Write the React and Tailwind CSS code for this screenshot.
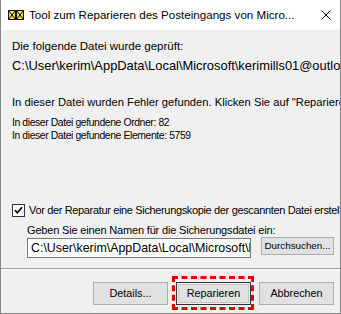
import React from "react";

function AppIcon() {
  return (
    <svg width="16" height="10" viewBox="0 0 16 10" className="shrink-0">
      <rect x="0.5" y="0.5" width="7" height="9" fill="#e9d94a" stroke="#111" />
      <path d="M0.5 0.5 L7.5 9.5 M7.5 0.5 L0.5 9.5" stroke="#111" strokeWidth="1" />
      <rect x="8.5" y="0.5" width="7" height="9" fill="#e9d94a" stroke="#111" />
      <path d="M8.5 0.5 L15.5 9.5 M15.5 0.5 L8.5 9.5" stroke="#111" strokeWidth="1" />
    </svg>
  );
}

export default function App() {
  const sans = { fontFamily: '"Liberation Sans", Arial, sans-serif' };
  return (
    <div
      className="w-[341px] h-[314px] flex flex-col border-l border-r border-b border-[#858585] bg-[#f0f0f0] overflow-hidden text-black"
      style={sans}
    >
      {/* title bar */}
      <div className="h-[30px] shrink-0 bg-white flex items-center pl-[7px] pr-[9px]">
        <AppIcon />
        <span className="ml-[5px] text-[11.6px] whitespace-nowrap">
          Tool zum Reparieren des Posteingangs von Micro...
        </span>
        <div className="ml-auto flex">
          <svg width="10" height="10" viewBox="0 0 10 10">
            <path d="M0.5 0.5 L9.5 9.5 M9.5 0.5 L0.5 9.5" stroke="#111" strokeWidth="1" />
          </svg>
        </div>
      </div>

      {/* content */}
      <div className="flex-1 flex flex-col overflow-hidden">
        <div className="pl-[11px] pt-[8px] whitespace-nowrap">
          <div className="text-[11.5px] leading-[16px]">Die folgende Datei wurde geprüft:</div>
          <div className="text-[12.9px] leading-[16px] mt-[4px]">
            C:\User\kerim\AppData\Local\Microsoft\kerimills01@outlook.com.pst
          </div>
          <div className="text-[11.2px] leading-[16px] mt-[20px]">
            In dieser Datei wurden Fehler gefunden. Klicken Sie auf "Reparieren", um sie zu beheben.
          </div>
          <div className="text-[10.4px] tracking-[-0.4px] leading-[13px] mt-[6px]">
            In dieser Datei gefundene Ordner: 82
          </div>
          <div className="text-[10.4px] tracking-[-0.4px] leading-[13px]">
            In dieser Datei gefundene Elemente: 5759
          </div>
        </div>

        <div className="pl-[11px] mt-[60px] flex items-center whitespace-nowrap h-[16px]">
          <div className="w-[13px] h-[13px] shrink-0 bg-white border border-[#333] flex items-center justify-center">
            <svg width="9" height="9" viewBox="0 0 9 9">
              <path d="M1 4.2 L3.4 6.8 L8 1.3" fill="none" stroke="#000" strokeWidth="1.7" />
            </svg>
          </div>
          <span className="ml-[4px] text-[11px] tracking-[-0.35px] leading-[16px]">
            Vor der Reparatur eine Sicherungskopie der gescannten Datei erstellen
          </span>
        </div>

        <div className="pl-[26px] mt-[4px] text-[11px] tracking-[-0.17px] leading-[16px] whitespace-nowrap">
          Geben Sie einen Namen für die Sicherungsdatei ein:
        </div>

        <div className="pl-[26px] flex items-start">
          <div className="w-[224px] h-[20px] shrink-0 bg-white border border-[#7a7a7a] overflow-hidden whitespace-nowrap text-[12.4px] leading-[18px] pl-[3px]">
            C:\User\kerim\AppData\Local\Microsoft\kerimills01@outlook.com.bak
          </div>
          <div className="ml-[10px] -mt-[1px] h-[18px] w-[73px] shrink-0 flex items-center justify-center bg-[#e1e1e1] border border-[#adadad] text-[9.8px] whitespace-nowrap">
            Durchsuchen...
          </div>
        </div>

        <div className="mt-[10px] h-px bg-[#a0a0a0] border-b border-white box-content shrink-0"></div>

        <div className="flex items-start pl-[92px] mt-[6px]">
          <div className="mt-[6px] h-[23px] w-[75px] shrink-0 flex items-center justify-center bg-[#e1e1e1] border border-[#adadad] text-[10.8px]">
            Details...
          </div>
          <div className="ml-[4px] w-[82px] h-[34px] shrink-0 border-[3px] border-dashed border-[#e60000] pl-[1px] pt-[3px]">
            <div className="w-[75px] h-[23px] border border-[#333] p-px">
              <div className="w-full h-full flex items-center justify-center bg-[#e1e1e1] border border-[#c4c4c4] text-[10.8px]">
                Reparieren
              </div>
            </div>
          </div>
          <div className="ml-[5px] mt-[6px] h-[23px] w-[75px] shrink-0 flex items-center justify-center bg-[#e1e1e1] border border-[#adadad] text-[10.8px]">
            Abbrechen
          </div>
        </div>
      </div>
    </div>
  );
}
